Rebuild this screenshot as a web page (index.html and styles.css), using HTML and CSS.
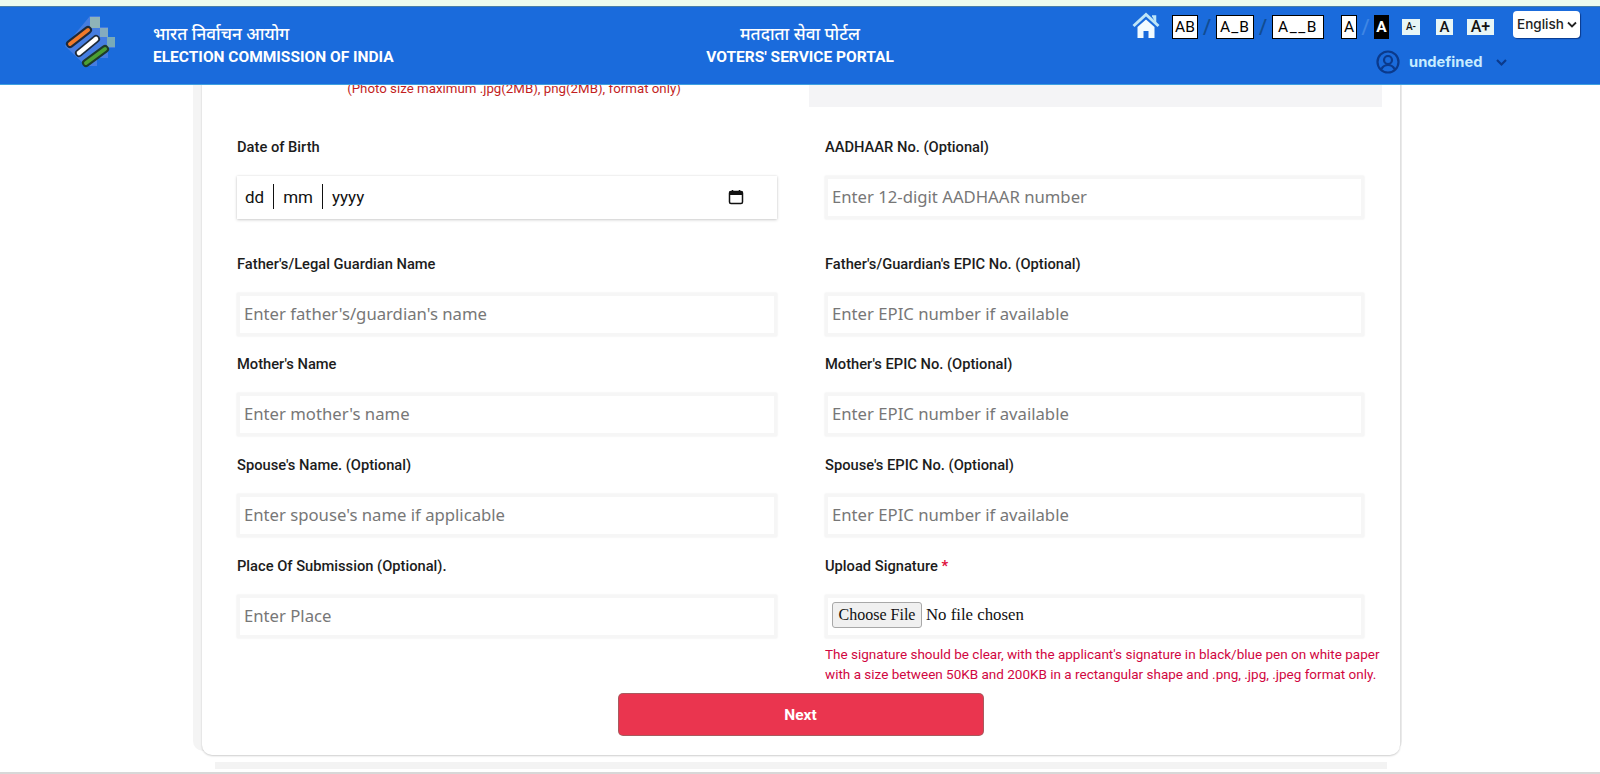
FILE: index.html
```html
<!DOCTYPE html>
<html lang="en">
<head>
<meta charset="utf-8">
<title>Voters' Service Portal</title>
<link rel="stylesheet" href="styles.css">
</head>
<body>
<header class="topbar">
  <div class="brand">
    <svg class="logo" width="56" height="56" viewBox="0 0 56 56" aria-hidden="true">
      <path d="M28 3h10v11h8v10h7v11h-7v10H35v8H24L3 33z" fill="#6f8fe6" opacity=".5"/>
      <rect x="28" y="4" width="10" height="11" fill="#8fb3b8"/>
      <rect x="38" y="15" width="8" height="9" fill="#8fb3b8" opacity=".85"/>
      <rect x="45" y="24" width="8" height="10" fill="#82b1b0" opacity=".85"/>
      <g fill="none" stroke-linecap="round">
        <path d="M8 31 26 17" stroke="#1d2a3a" stroke-width="8"/>
        <path d="M8 31 26 17" stroke="#f07a2a" stroke-width="4"/>
        <path d="M17 40 34 26" stroke="#1d2a3a" stroke-width="8"/>
        <path d="M17 40 34 26" stroke="#fff" stroke-width="4.500"/>
        <path d="M24 50 43 36" stroke="#1d3a2a" stroke-width="8"/>
        <path d="M24 50 43 36" stroke="#4c9f33" stroke-width="4"/>
      </g>
    </svg>
    <div class="brand-text">
      <div class="hi">भारत निर्वाचन आयोग</div>
      <div class="en">ELECTION COMMISSION OF INDIA</div>
    </div>
  </div>
  <div class="portal">
    <div class="hi">मतदाता सेवा पोर्टल</div>
    <div class="en">VOTERS' SERVICE PORTAL</div>
  </div>
  <div class="tools">
    <div class="tool-row">
      <svg class="home" width="28" height="28" viewBox="0 0 28 28" aria-hidden="true">
        <path d="M1.500 14 14 2.500 26.500 14" fill="none" stroke="#bfe6f7" stroke-width="3"/>
        <path d="M20 4h3.500v7" fill="#bfe6f7" stroke="#bfe6f7" stroke-width="1.500"/>
        <path d="M5.500 15 14 7.500l8.500 7.500v11h-6v-7h-5v7h-6z" fill="#f2fbff"/>
      </svg>
      <span class="key wide0">AB</span><span class="sep dark">/</span><span class="key wide1">A_B</span><span class="sep dark">/</span><span class="key wide2">A__B</span>
      <span class="key single">A</span><span class="sep">/</span><span class="key single inverse">A</span>
      <span class="size small">A-</span><span class="size mid">A</span><span class="size big">A+</span>
      <div class="lang">English
        <svg width="10" height="7" viewBox="0 0 10 7" aria-hidden="true"><path d="M1 1.500 5 5.500 9 1.500" fill="none" stroke="#222" stroke-width="1.800"/></svg>
      </div>
    </div>
    <div class="user-row">
      <svg width="24" height="24" viewBox="0 0 24 24" aria-hidden="true">
        <circle cx="12" cy="12" r="10.500" fill="none" stroke="#0b3a8c" stroke-width="2.200"/>
        <circle cx="12" cy="10" r="4" fill="none" stroke="#0b3a8c" stroke-width="2.200"/>
        <path d="M5.500 19c1.500-3 3.500-4 6.500-4s5 1 6.500 4" fill="none" stroke="#0b3a8c" stroke-width="2.200"/>
      </svg>
      <span class="uname">undefined</span>
      <svg class="ucaret" width="13" height="9" viewBox="0 0 13 9" aria-hidden="true"><path d="M2 2 6.500 6.500 11 2" fill="none" stroke="#0b3a8c" stroke-width="2.200"/></svg>
    </div>
  </div>
</header>

<main class="card">
  <div class="top-row">
    <p class="photo-note">(Photo size maximum .jpg(2MB), png(2MB), format only)</p>
    <div class="photo-panel"></div>
  </div>
  <form class="form-grid">
    <div class="field first">
      <label class="lbl">Date of Birth</label>
      <div class="control date">
        <span>dd</span><i></i><span>mm</span><i></i><span>yyyy</span>
        <svg class="cal" width="16" height="16" viewBox="0 0 16 16" aria-hidden="true">
          <rect x="1.500" y="2.500" width="13" height="12" rx="1.500" fill="none" stroke="#111" stroke-width="1.500"/>
          <rect x="1.500" y="2.500" width="13" height="3.500" fill="#111"/>
          <path d="M4.500 1v2M11.500 1v2" stroke="#111" stroke-width="1.500"/>
        </svg>
      </div>
    </div>
    <div class="field first">
      <label class="lbl">AADHAAR No. (Optional)</label>
      <div class="control ph">Enter 12-digit AADHAAR number</div>
    </div>
    <div class="field second">
      <label class="lbl">Father's/Legal Guardian Name</label>
      <div class="control ph">Enter father's/guardian's name</div>
    </div>
    <div class="field second">
      <label class="lbl">Father's/Guardian's EPIC No. (Optional)</label>
      <div class="control ph">Enter EPIC number if available</div>
    </div>
    <div class="field">
      <label class="lbl">Mother's Name</label>
      <div class="control ph">Enter mother's name</div>
    </div>
    <div class="field">
      <label class="lbl">Mother's EPIC No. (Optional)</label>
      <div class="control ph">Enter EPIC number if available</div>
    </div>
    <div class="field">
      <label class="lbl">Spouse's Name. (Optional)</label>
      <div class="control ph">Enter spouse's name if applicable</div>
    </div>
    <div class="field">
      <label class="lbl">Spouse's EPIC No. (Optional)</label>
      <div class="control ph">Enter EPIC number if available</div>
    </div>
    <div class="field last">
      <label class="lbl">Place Of Submission (Optional).</label>
      <div class="control ph">Enter Place</div>
    </div>
    <div class="field last">
      <label class="lbl">Upload Signature <b class="req">*</b></label>
      <div class="control file"><span class="file-btn">Choose File</span><span>No file chosen</span></div>
      <p class="hint">The signature should be clear, with the applicant's signature in black/blue pen on white paper with a size between 50KB and 200KB in a rectangular shape and .png, .jpg, .jpeg format only.</p>
    </div>
  </form>
  <div class="actions"><button class="next" type="button">Next</button></div>
</main>
<div class="under-card"></div>
</body>
</html>
```

FILE: styles.css
```css
* { box-sizing: border-box; }
html, body { margin: 0; height: 774px; overflow: hidden; background: #fff; }
body { font-family: Roboto, "Liberation Sans", sans-serif; color: #111; border-bottom: 2px solid #d8d8d8; }

.topbar {
  position: fixed; top: 6px; left: 0; right: 0; height: 79px; z-index: 5;
  background: #1a6bdc;
  border-top: 1px solid #4a7fa8;
  border-bottom: 1px solid #3ea0e0;
  display: flex; color: #fff;
}
.topbar::before {
  content: ""; position: absolute; left: 0; right: 0; top: -7px; height: 6px; background: #edfbef;
}
.brand { width: 700px; flex: none; padding: 6px 0 0 62px; display: flex; gap: 35px; }
.logo { flex: none; }
.hi { font-family: "Noto Sans", "Noto Sans Devanagari", "Lohit Devanagari", "DejaVu Sans", sans-serif; font-size: 17.200px; line-height: 22px; font-weight: 500; }
.en { font-size: 15.500px; line-height: 20px; font-weight: 700; margin-top: 2px; white-space: nowrap; }
.brand-text { padding-top: 10px; }
.portal { width: 200px; padding-top: 16px; text-align: center; flex: none; }
.tools { margin-left: 232px; padding-top: 4px; flex: none; width: 456px; }
.tool-row { display: flex; align-items: center; height: 32px; color: #000; }
.home { margin-right: 12px; margin-top: -3px; flex: none; }
.key {
  background: #fff; border: 1px solid #000; height: 24px; font: 400 15.500px/23px Roboto, sans-serif;
  text-align: center; display: block; white-space: pre; flex: none;
}
.wide0 { width: 26px; }
.wide1 { width: 38px; letter-spacing: 1px; }
.wide2 { width: 52px; letter-spacing: 1.500px; margin-right: 17px; }
.single { width: 16px; }
.single.inverse { width: 15px; background: #000; color: #fff; margin-right: 13px; font-weight: 700; }
.sep { color: #3f86e4; font: 500 21px/24px Roboto, sans-serif; width: 18px; text-align: center; flex: none; }
.sep.dark { color: #114c92; }
.single + .sep { width: 17px; }
.size { background: #e8f6f6; font-weight: 500; text-align: center; color: #111; flex: none; }
.small { width: 18px; height: 16px; font-size: 10px; line-height: 16px; margin-right: 16px; }
.mid { width: 17px; height: 16px; font-size: 15px; line-height: 16px; margin-right: 14px; }
.big { width: 27px; height: 16px; font-size: 16px; line-height: 16px; margin-right: 19px; }
.lang {
  background: #fff; width: 67px; height: 27px; border-radius: 4px; margin-top: -5px; flex: none;
  box-shadow: 1px 1px 1px #0b3a8c;
  font: 500 13.500px/27px Inter, sans-serif; color: #222; padding-left: 4px;
  display: flex; align-items: center; gap: 3px;
}
.user-row { display: flex; align-items: center; gap: 9px; margin: 7px 0 0 244px; }
.uname { font: 700 14.700px/24px Inter, sans-serif; color: #c8ecff; margin-right: 4px; }

.card {
  width: 1198px; height: 755px; margin-left: 202px; padding: 85px 36px 0 35px;
  border-radius: 0 0 10px 10px; background: #fff;
  box-shadow: 0 1px 2px rgba(0,0,0,.2), -9px -4px 0 0 #f4f4f4, 2px -4px 0 0 #ececec;
}
.top-row { display: grid; grid-template-columns: 572px 573px; height: 22px; margin-right: -18px; }
.photo-note { margin: -4px 0 0; height: 16px; font: 13.300px/16px Roboto, sans-serif; color: #c21f1f; text-align: center; padding-right: 18px; white-space: nowrap; }
.photo-panel { background: #f4f4f6; }

.form-grid { display: grid; grid-template-columns: 540px 539px; column-gap: 48px; }
.field { height: 101px; }
.field.first { height: 148px; padding-top: 31px; }
.field.second { height: 100px; }
.field.last { height: auto; }
.lbl { display: block; font: 500 14.700px/18px Roboto, sans-serif; height: 38px; color: #1c1c1c; }
.req { color: #e0103c; font-weight: 700; }
.control {
  height: 43px; background: #fff; display: flex; align-items: center;
  box-shadow: inset 0 0 0 3px #f6f6f6, 0 0 2px #e8e8e8;
  padding: 0 0 2px 7px; font: 16.700px/24px "Noto Sans", sans-serif; white-space: nowrap;
}
.ph { color: #777; }
.date { font: 17px/24px Roboto, sans-serif; color: #111; padding-left: 8px; box-shadow: 0 1px 3px rgba(0,0,0,.18), 0 0 2px #e8e8e8; }
.date i { width: 1px; height: 25px; background: #111; margin: 0 9px; }
.cal { margin-left: auto; margin-right: 33px; }
.file { font: 16.800px/24px "Liberation Serif", serif; color: #111; padding: 0 0 3px 7px; gap: 4px; }
.file-btn {
  background: #f0f0f0; border: 1px solid #a8a8a8; border-radius: 3px;
  height: 26px; width: 90px; font-size: 16px; line-height: 24px; text-align: center;
}
.hint { margin: 6px -16px 0 0; font: 13.500px/20px Roboto, sans-serif; color: #d1063f; }
.actions { display: flex; justify-content: center; margin-top: 10px; }
.next {
  width: 364px; height: 41px; border: 0; border-radius: 4px; background: #ea354f;
  box-shadow: 0 0 0 1px #a85a5e; color: #fff; font: 700 15.500px/41px Roboto, sans-serif;
}
.under-card { height: 7px; margin: 7px 0 0 215px; width: 1172px; background: #f3f3f3; }
```
